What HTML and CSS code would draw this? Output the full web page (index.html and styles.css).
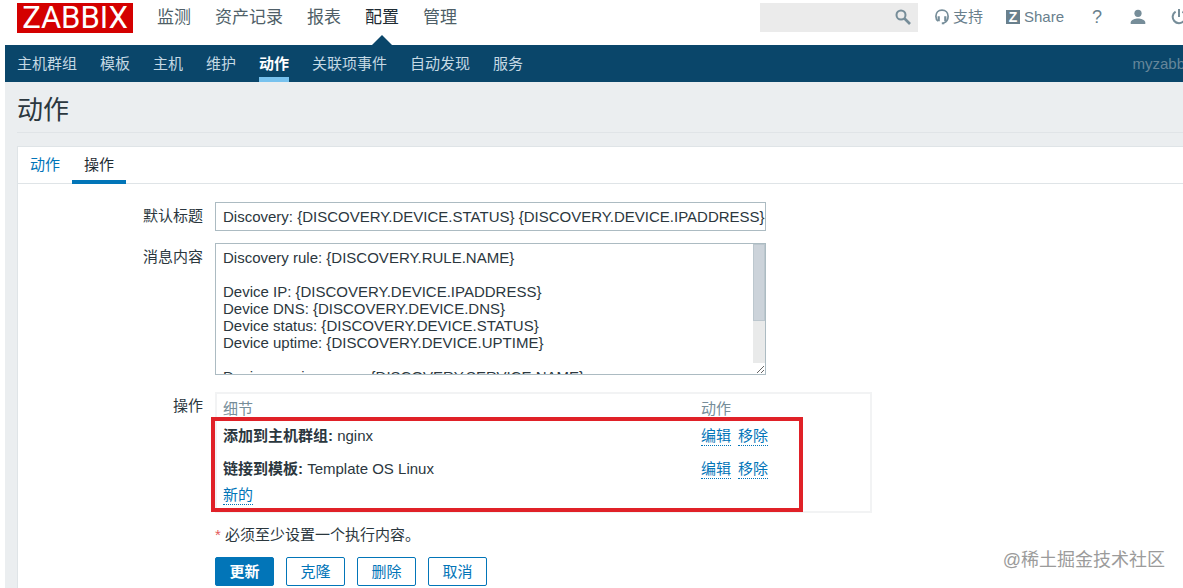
FILE: index.html
```html
<!DOCTYPE html>
<html lang="zh-CN">
<head>
    <meta charset="UTF-8">
    <meta name="viewport" content="width=device-width, initial-scale=1.0">
    <title>动作</title>
    <link rel="stylesheet" href="styles.css">
</head>
<body>
    <header class="top-bar">
        <a class="logo" href="#">ZABBIX</a>
        <nav class="main-nav">
            <a href="#">监测</a>
            <a href="#">资产记录</a>
            <a href="#">报表</a>
            <a href="#" class="selected">配置</a>
            <a href="#">管理</a>
        </nav>
        <div class="top-tools">
            <form class="search">
                <input type="text" aria-label="搜索">
                <button type="button" aria-label="搜索">
                    <svg width="18" height="18" viewBox="0 0 18 18" fill="none" stroke="#768d99">
                        <circle cx="7" cy="7" r="4.5" stroke-width="2"/>
                        <path d="M10.5 10.5L16 16" stroke-width="2.6"/>
                    </svg>
                </button>
            </form>
            <a class="tool support" href="#">
                <svg width="14" height="16" viewBox="0 0 14 16" fill="none" stroke="#768d99">
                    <path d="M3 12C1.400 11 .9 9.300.9 7.200C.9 3.500 3.400 1.200 7 1.200s6.100 2.300 6.100 6c0 3.200-1.500 5.800-4.600 6.800" stroke-width="1.700"/>
                    <path d="M3.700 7.300v5M10.300 7.300v5" stroke-width="2.200"/>
                    <path d="M6.800 14.300h2.400" stroke-width="2"/>
                </svg>
                支持
            </a>
            <a class="tool share" href="#"><span class="share-badge">Z</span>Share</a>
            <a class="tool help" href="#">?</a>
            <a class="tool user" href="#" aria-label="用户">
                <svg width="16" height="16" viewBox="0 0 16 16" fill="#768d99">
                    <circle cx="8" cy="4.300" r="3.600"/>
                    <path d="M.7 15v-1.500c0-2.700 4.800-4 7.300-4s7.300 1.300 7.300 4V15z"/>
                </svg>
            </a>
            <a class="tool" href="#" aria-label="退出">
                <svg width="16" height="16" viewBox="0 0 16 16" fill="none" stroke="#768d99" stroke-width="2">
                    <path d="M8 0v8M4.600 2.600a6.300 6.300 0 1 0 6.800 0"/>
                </svg>
            </a>
        </div>
    </header>

    <div class="sub-bar">
        <nav class="sub-nav">
            <a href="#">主机群组</a>
            <a href="#">模板</a>
            <a href="#">主机</a>
            <a href="#">维护</a>
            <a href="#" class="selected">动作</a>
            <a href="#">关联项事件</a>
            <a href="#">自动发现</a>
            <a href="#">服务</a>
        </nav>
        <span class="server-name">myzabb</span>
    </div>

    <main>
        <h1>动作</h1>
        <section class="panel">
            <nav class="tabs">
                <a href="#">动作</a>
                <a href="#" class="selected">操作</a>
            </nav>
            <form class="action-form">
                <label for="subject">默认标题</label>
                <input type="text" id="subject" class="field" value="Discovery: {DISCOVERY.DEVICE.STATUS} {DISCOVERY.DEVICE.IPADDRESS}">

                <label for="message">消息内容</label>
                <div class="message-box">
                    <textarea id="message" class="field">Discovery rule: {DISCOVERY.RULE.NAME}

Device IP: {DISCOVERY.DEVICE.IPADDRESS}
Device DNS: {DISCOVERY.DEVICE.DNS}
Device status: {DISCOVERY.DEVICE.STATUS}
Device uptime: {DISCOVERY.DEVICE.UPTIME}

Device service name: {DISCOVERY.SERVICE.NAME}
Device service port: {DISCOVERY.SERVICE.PORT}
Device service status: {DISCOVERY.SERVICE.STATUS}
Device service uptime: {DISCOVERY.SERVICE.UPTIME}</textarea>
                    <div class="scrollbar"><div class="scrollbar-thumb"></div></div>
                </div>

                <span class="form-label" id="operations-label">操作</span>
                <div class="operations">
                    <table aria-labelledby="operations-label">
                        <thead>
                            <tr>
                                <th class="details">细节</th>
                                <th>动作</th>
                            </tr>
                        </thead>
                        <tbody>
                            <tr>
                                <td><b>添加到主机群组:</b> nginx</td>
                                <td><a href="#">编辑</a><a href="#">移除</a></td>
                            </tr>
                            <tr>
                                <td><b>链接到模板:</b> Template OS Linux</td>
                                <td><a href="#">编辑</a><a href="#">移除</a></td>
                            </tr>
                            <tr class="new-row">
                                <td colspan="2"><a href="#">新的</a></td>
                            </tr>
                        </tbody>
                    </table>
                    <div class="highlight"></div>
                </div>

                <div class="form-footer">
                    <p><span class="required">*</span> 必须至少设置一个执行内容。</p>
                    <div class="buttons">
                        <button type="button" class="primary">更新</button>
                        <button type="button">克隆</button>
                        <button type="button">删除</button>
                        <button type="button">取消</button>
                    </div>
                </div>
            </form>
        </section>
    </main>
    <div class="watermark">@稀土掘金技术社区</div>
</body>
</html>
```
FILE: styles.css
```css
* {
    box-sizing: border-box;
}

body {
    margin: 0;
    padding-left: 5px;
    min-height: 100vh;
    display: flex;
    flex-direction: column;
    overflow: hidden;
    background: #fff;
    color: #2b373e;
    font-family: "Liberation Sans", "Noto Sans CJK SC", sans-serif;
    font-size: 15px;
    line-height: 20px;
}

a {
    color: #0275b8;
    text-decoration: none;
}

input,
textarea,
button {
    font: inherit;
    color: inherit;
}

/* Top bar */
.top-bar {
    display: flex;
    height: 45px;
    padding-left: 12px;
}

.logo {
    width: 116px;
    height: 30px;
    margin-top: 3px;
    background: #d40000;
    color: #fff;
    font-family: Roboto, sans-serif;
    font-size: 31px;
    line-height: 30px;
    text-align: center;
}

.main-nav {
    display: flex;
    gap: 24px;
    margin-left: 24px;
    font-size: 17px;
    line-height: 35px;
}

.main-nav a {
    position: relative;
    color: #4f5f68;
}

.main-nav .selected {
    color: #1f2c33;
}

.main-nav .selected::after {
    content: "";
    position: absolute;
    bottom: 0;
    left: 50%;
    margin-left: -10px;
    border: 10px solid transparent;
    border-top: 0;
    border-bottom-color: #0a466a;
}

.top-tools {
    display: flex;
    align-items: center;
    height: 34px;
    margin-left: auto;
    margin-right: -4px;
}

.search {
    display: flex;
    width: 158px;
    height: 29px;
    margin-right: 17px;
    background: #ebebeb;
}

.search input {
    flex: 1;
    min-width: 0;
    border: 0;
    background: transparent;
}

.search button {
    display: flex;
    align-items: center;
    width: 24px;
    padding: 0;
    border: 0;
    background: none;
}

.tool {
    display: flex;
    align-items: center;
    gap: 4px;
    color: #69808d;
}

.support {
    margin-right: 23px;
}

.share {
    margin-right: 28px;
}

.share-badge {
    width: 14px;
    height: 14px;
    background: #69808d;
    color: #fff;
    font-size: 14px;
    font-weight: bold;
    line-height: 15px;
    text-align: center;
}

.help {
    margin-right: 28px;
    font-size: 18px;
}

.user {
    margin-right: 25px;
}

/* Second level menu */
.sub-bar {
    display: flex;
    justify-content: space-between;
    height: 37px;
    padding-left: 12px;
    background: #0a466a;
    line-height: 37px;
}

.sub-nav {
    display: flex;
    gap: 23px;
}

.sub-nav a {
    color: #c5d9e4;
}

.sub-nav .selected {
    color: #fff;
    font-weight: bold;
    border-bottom: 5px solid #78c2ee;
}

.server-name {
    margin-right: -2px;
    color: #66869a;
}

/* Page content */
main {
    flex: 1;
    display: flex;
    flex-direction: column;
    padding-left: 12px;
    background: #ebeef0;
}

h1 {
    margin: 0 0 13px;
    padding: 11px 0 5px;
    border-bottom: 1px solid #e0e4e7;
    font-size: 26px;
    font-weight: normal;
    line-height: 34px;
}

.panel {
    flex: 1;
    background: #fff;
    border: 1px solid #dfe4e7;
    border-right: 0;
    border-bottom: 0;
}

.tabs {
    display: flex;
    height: 37px;
    border-bottom: 1px solid #dfe4e7;
    line-height: 35px;
}

.tabs a {
    height: 37px;
    padding: 0 12px;
}

.tabs .selected {
    color: #1f2c33;
    border-bottom: 4px solid #0275b8;
}

/* Form */
.action-form {
    display: grid;
    grid-template-columns: 185px 1fr;
    column-gap: 12px;
    padding-top: 18px;
}

.action-form > label,
.form-label {
    padding-top: 4px;
    text-align: right;
}

.field {
    width: 551px;
    border: 1px solid #acbbc2;
    background: #fff;
}

input.field {
    height: 29px;
    margin-bottom: 12px;
    padding: 0 0 1px 7px;
}

.message-box {
    position: relative;
    width: 551px;
    margin-bottom: 17px;
}

textarea.field {
    display: block;
    height: 132px;
    padding: 5px 19px 5px 7px;
    line-height: 17px;
    overflow: hidden;
    resize: both;
}

/* Scroll bar drawn over the right edge of the message, above the resize grip */
.scrollbar {
    position: absolute;
    top: 1px;
    right: 1px;
    bottom: 12px;
    width: 12px;
    background: #e9eaea;
}

.scrollbar-thumb {
    height: 65%;
    background: #ccd3da;
    border: 1px solid #bcc7ce;
}

.operations {
    position: relative;
    width: 657px;
    height: 121px;
    padding: 5px 6px;
    border: 2px solid #f2f3f4;
}

.operations table {
    width: 100%;
    border-collapse: collapse;
}

.operations th,
.operations td {
    padding: 0;
    text-align: left;
}

.operations th {
    height: 20px;
    color: #768d99;
    font-weight: normal;
}

.operations td {
    height: 33px;
}

.operations .details {
    width: 478px;
}

.operations .new-row td {
    height: 20px;
}

.operations td a {
    display: inline-block;
    margin-right: 7px;
    line-height: 19px;
    border-bottom: 1px dotted #0275b8;
}

/* Red frame drawn over the operations list */
.highlight {
    position: absolute;
    top: 23px;
    left: -6px;
    width: 592px;
    height: 95px;
    border: 4px solid #e02128;
    pointer-events: none;
}

.form-footer {
    grid-column: 2;
}

.form-footer p {
    margin: 12px 0;
}

.required {
    color: #e45959;
}

.buttons {
    display: flex;
    gap: 12px;
}

.buttons button {
    width: 59px;
    height: 29px;
    padding: 0;
    border: 1px solid #0275b8;
    border-radius: 2px;
    background: #fff;
    color: #0275b8;
}

.buttons .primary {
    background: #0275b8;
    color: #fff;
    font-weight: bold;
}

.watermark {
    position: absolute;
    right: 18px;
    bottom: 16px;
    color: #9b9b9b;
    font-size: 18px;
    line-height: 24px;
}
```
